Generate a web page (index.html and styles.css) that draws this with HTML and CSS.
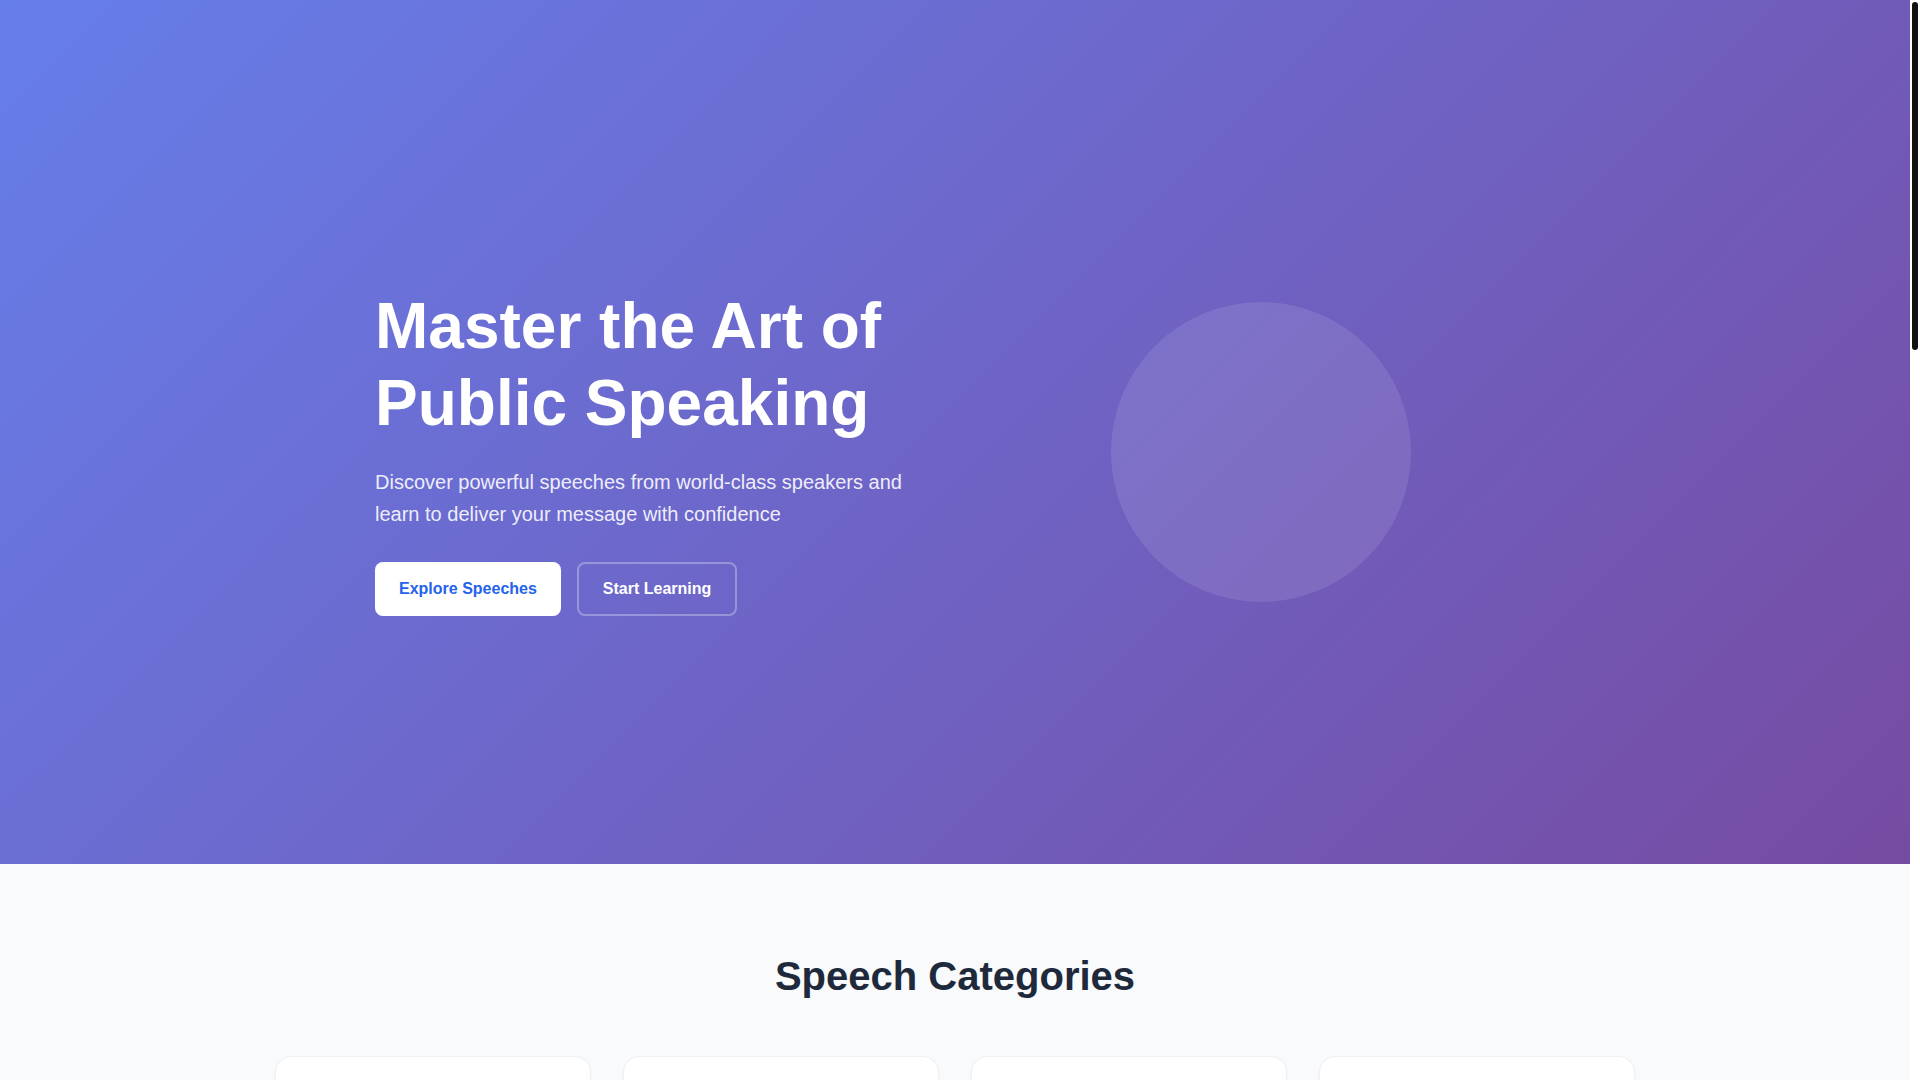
FILE: index.html
```html
<!DOCTYPE html>
<html lang="en">
<head>
<meta charset="utf-8">
<title>SpeakMaster – Master the Art of Public Speaking</title>
<link rel="stylesheet" href="styles.css">
</head>
<body>
<div class="page">
<section class="hero">
  <div class="hero-inner">
    <div class="hero-text">
      <h1 class="hero-title">Master the Art of Public Speaking</h1>
      <p class="hero-lead">Discover powerful speeches from world-class speakers and learn to deliver your message with confidence</p>
      <div class="hero-actions">
        <a class="btn btn-primary" href="#categories">Explore Speeches</a>
        <a class="btn btn-outline" href="#learn">Start Learning</a>
      </div>
    </div>
    <div class="hero-visual">
      <div class="hero-circle"></div>
    </div>
  </div>
</section>

<section class="categories" id="categories">
  <div class="container">
    <h2 class="section-title">Speech Categories</h2>
    <div class="card-grid">
      <article class="cat-card">
        <div class="cat-icon">
          <svg viewBox="0 0 24 24" width="28" height="28" fill="none" stroke="currentColor" stroke-width="2" stroke-linecap="round" stroke-linejoin="round"><path d="M12 2l3 6.5 7 1-5 4.9 1.2 7-6.2-3.3-6.2 3.3 1.2-7-5-4.9 7-1z"/></svg>
        </div>
        <h3 class="cat-title">Inspirational</h3>
        <p class="cat-text">Motivating talks that spark change and inspire audiences to reach their full potential.</p>
        <span class="cat-meta">124 speeches</span>
      </article>
      <article class="cat-card">
        <div class="cat-icon">
          <svg viewBox="0 0 24 24" width="28" height="28" fill="none" stroke="currentColor" stroke-width="2" stroke-linecap="round" stroke-linejoin="round"><path d="M3 21h18M5 21V10M19 21V10M9 21V10M15 21V10M2 10l10-7 10 7z"/></svg>
        </div>
        <h3 class="cat-title">Political</h3>
        <p class="cat-text">Historic addresses from leaders who shaped nations and defined entire generations.</p>
        <span class="cat-meta">86 speeches</span>
      </article>
      <article class="cat-card">
        <div class="cat-icon">
          <svg viewBox="0 0 24 24" width="28" height="28" fill="none" stroke="currentColor" stroke-width="2" stroke-linecap="round" stroke-linejoin="round"><rect x="3" y="7" width="18" height="13" rx="2"/><path d="M8 7V5a2 2 0 0 1 2-2h4a2 2 0 0 1 2 2v2"/></svg>
        </div>
        <h3 class="cat-title">Business</h3>
        <p class="cat-text">Keynotes and pitches from entrepreneurs and executives on leadership and growth.</p>
        <span class="cat-meta">97 speeches</span>
      </article>
      <article class="cat-card">
        <div class="cat-icon">
          <svg viewBox="0 0 24 24" width="28" height="28" fill="none" stroke="currentColor" stroke-width="2" stroke-linecap="round" stroke-linejoin="round"><path d="M2 8l10-5 10 5-10 5z"/><path d="M6 10v5c3 3 9 3 12 0v-5"/></svg>
        </div>
        <h3 class="cat-title">Educational</h3>
        <p class="cat-text">Lectures and commencement speeches that share knowledge and lasting life lessons.</p>
        <span class="cat-meta">112 speeches</span>
      </article>
    </div>
  </div>
</section>

<section class="featured">
  <div class="container">
    <h2 class="section-title">Featured Speeches</h2>
    <div class="speech-grid">
      <article class="speech-card"><div class="speech-thumb"></div><div class="speech-body"><h3 class="speech-title">I Have a Dream</h3><p class="speech-meta">Martin Luther King Jr. · 1963</p></div></article>
      <article class="speech-card"><div class="speech-thumb"></div><div class="speech-body"><h3 class="speech-title">Stay Hungry, Stay Foolish</h3><p class="speech-meta">Steve Jobs · 2005</p></div></article>
      <article class="speech-card"><div class="speech-thumb"></div><div class="speech-body"><h3 class="speech-title">We Shall Fight on the Beaches</h3><p class="speech-meta">Winston Churchill · 1940</p></div></article>
      <article class="speech-card"><div class="speech-thumb"></div><div class="speech-body"><h3 class="speech-title">The Gettysburg Address</h3><p class="speech-meta">Abraham Lincoln · 1863</p></div></article>
      <article class="speech-card"><div class="speech-thumb"></div><div class="speech-body"><h3 class="speech-title">Ain't I a Woman?</h3><p class="speech-meta">Sojourner Truth · 1851</p></div></article>
      <article class="speech-card"><div class="speech-thumb"></div><div class="speech-body"><h3 class="speech-title">The Danger of a Single Story</h3><p class="speech-meta">Chimamanda Ngozi Adichie · 2009</p></div></article>
    </div>
  </div>
</section>

<section class="learn" id="learn">
  <div class="container">
    <h2 class="section-title">Learn to Speak with Confidence</h2>
    <div class="steps">
      <div class="step"><span class="step-num">1</span><h3 class="step-title">Watch</h3><p class="step-text">Study great speakers and observe their delivery.</p></div>
      <div class="step"><span class="step-num">2</span><h3 class="step-title">Practice</h3><p class="step-text">Rehearse with guided exercises and feedback.</p></div>
      <div class="step"><span class="step-num">3</span><h3 class="step-title">Deliver</h3><p class="step-text">Take the stage and share your message.</p></div>
    </div>
  </div>
</section>

<footer class="footer">
  <div class="container footer-inner">
    <p class="footer-brand">SpeakMaster</p>
    <p class="footer-copy">© 2024 SpeakMaster. All rights reserved.</p>
  </div>
</footer>
</div>

<div class="scrollbar" aria-hidden="true"><div class="scrollbar-thumb"></div></div>
</body>
</html>
```

FILE: styles.css
```css
* {
  box-sizing: border-box;
}

html {
  background: #ffffff;
}

body {
  margin: 0;
  font-family: "Liberation Sans", Arial, sans-serif;
  color: #1e293b;
  background: #ffffff;
}

.page {
  margin-right: 10px;
}

/* Page scrollbar as drawn in the reference */
.scrollbar {
  position: fixed;
  top: 0;
  right: 0;
  width: 10px;
  height: 100vh;
  background: #ffffff;
  padding: 2px;
}

.scrollbar-thumb {
  width: 6px;
  height: 348px;
  border-radius: 3px;
  background: #111111;
}

a {
  text-decoration: none;
}

.container {
  max-width: 1400px;
  margin: 0 auto;
  padding: 0 20px;
}

/* Hero */
.hero {
  min-height: 80vh;
  padding: 120px 0 80px;
  display: flex;
  align-items: center;
  background: linear-gradient(135deg, #667eea 0%, #764ba2 100%);
  color: #ffffff;
}

.hero-inner {
  width: 100%;
  max-width: 1200px;
  margin: 0 auto;
  padding: 0 20px;
  display: grid;
  grid-template-columns: 1fr 1fr;
  gap: 4rem;
  align-items: center;
}

.hero-title {
  margin: 0 0 1.5rem;
  font-size: 4rem;
  line-height: 1.2;
  font-weight: 700;
}

.hero-lead {
  margin: 0 0 2rem;
  font-size: 1.25rem;
  line-height: 1.6;
  color: rgba(255, 255, 255, 0.9);
}

.hero-actions {
  display: flex;
  gap: 1rem;
}

.btn {
  display: flex;
  align-items: center;
  padding: 1rem 1.5rem;
  font-size: 1rem;
  line-height: 1.1;
  font-weight: 700;
  border-radius: 8px;
}

.btn-primary {
  background: #ffffff;
  color: #2563eb;
}

.btn-outline {
  border: 2px solid rgba(255, 255, 255, 0.3);
  color: #ffffff;
}

.hero-visual {
  display: flex;
  justify-content: center;
}

.hero-circle {
  width: 300px;
  height: 300px;
  border-radius: 50%;
  background: rgba(255, 255, 255, 0.1);
}

/* Sections */
.section-title {
  margin: 0 0 3.5rem;
  font-size: 2.5rem;
  line-height: 1.2;
  font-weight: 700;
  text-align: center;
  color: #1e293b;
}

.categories {
  background: #f8fafc;
  padding: 88px 0 96px;
}

.card-grid {
  display: grid;
  grid-template-columns: repeat(4, 1fr);
  gap: 2rem;
}

.cat-card {
  background: #ffffff;
  border: 1px solid #edf0f4;
  border-radius: 16px;
  padding: 2rem;
  box-shadow: 0 1px 3px rgba(15, 23, 42, 0.04);
}

.cat-icon {
  width: 56px;
  height: 56px;
  border-radius: 14px;
  background: #eef2ff;
  color: #667eea;
  display: flex;
  align-items: center;
  justify-content: center;
  margin-bottom: 1.25rem;
}

.cat-title {
  margin: 0 0 0.75rem;
  font-size: 1.375rem;
  line-height: 1.3;
}

.cat-text {
  margin: 0 0 1.25rem;
  font-size: 0.95rem;
  line-height: 1.6;
  color: #64748b;
}

.cat-meta {
  font-size: 0.875rem;
  font-weight: 700;
  color: #667eea;
}

.featured {
  background: #ffffff;
  padding: 96px 0;
}

.speech-grid {
  display: grid;
  grid-template-columns: repeat(3, 1fr);
  gap: 2rem;
}

.speech-card {
  border-radius: 16px;
  overflow: hidden;
  border: 1px solid #edf0f4;
  background: #ffffff;
}

.speech-thumb {
  height: 200px;
  background: linear-gradient(135deg, #667eea 0%, #764ba2 100%);
}

.speech-body {
  padding: 1.5rem;
}

.speech-title {
  margin: 0 0 0.5rem;
  font-size: 1.25rem;
  line-height: 1.3;
}

.speech-meta {
  margin: 0;
  font-size: 0.9rem;
  color: #64748b;
}

.learn {
  background: #f8fafc;
  padding: 96px 0;
}

.steps {
  display: grid;
  grid-template-columns: repeat(3, 1fr);
  gap: 2rem;
}

.step {
  background: #ffffff;
  border-radius: 16px;
  border: 1px solid #edf0f4;
  padding: 2.5rem 2rem;
  text-align: center;
}

.step-num {
  display: inline-flex;
  width: 48px;
  height: 48px;
  border-radius: 50%;
  align-items: center;
  justify-content: center;
  background: #667eea;
  color: #ffffff;
  font-weight: 700;
  font-size: 1.25rem;
}

.step-title {
  margin: 1.25rem 0 0.5rem;
  font-size: 1.25rem;
}

.step-text {
  margin: 0;
  color: #64748b;
  line-height: 1.6;
}

.footer {
  background: #1e293b;
  color: #cbd5e1;
  padding: 64px 0;
}

.footer-inner {
  display: flex;
  justify-content: space-between;
  align-items: center;
}

.footer-brand {
  margin: 0;
  font-size: 1.5rem;
  font-weight: 700;
  color: #ffffff;
}

.footer-copy {
  margin: 0;
  font-size: 0.9rem;
}
```
